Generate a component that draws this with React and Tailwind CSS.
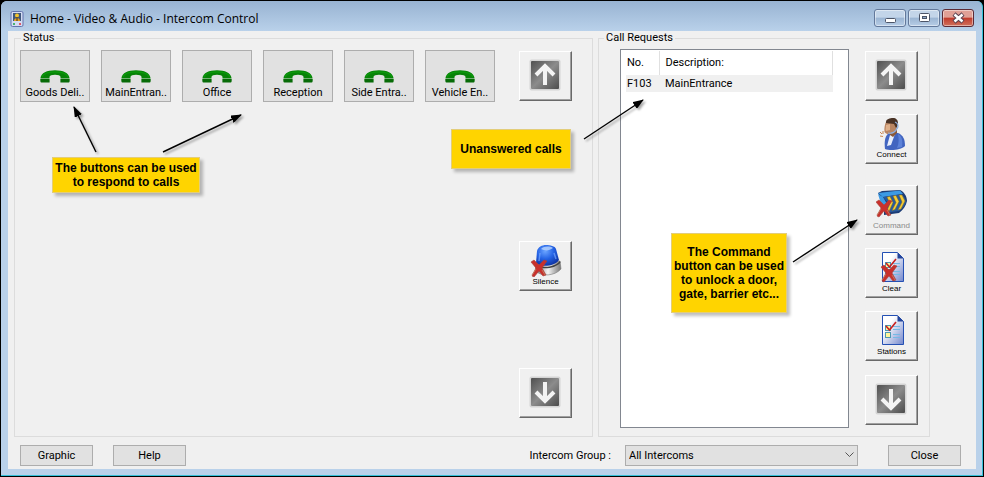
import React, { useState } from "react";

const STATIONS = ["Goods Deli..", "MainEntran..", "Office", "Reception", "Side Entra..", "Vehicle En.."];
const CALLS = [{ no: "F103", description: "MainEntrance" }];

export default function App() {
  const [group, setGroup] = useState("All Intercoms");

  return (
    <div className="relative flex min-h-screen flex-col bg-black p-px font-['Roboto','Noto_Sans',sans-serif] text-[11px] leading-[14px] text-black">
      <div className="flex flex-1 flex-col rounded-t-md border-r border-b border-[#35c0d8] bg-[#b9d1ea] bg-linear-to-b from-[#98b3d2] to-[#b9d1ea] to-[30px] pr-[6px] pb-[6px] pl-[7px]">
        {/* Title bar */}
        <header className="flex h-[30px] items-center gap-[6px] pt-[6px] pl-[2px]">
          <AppIcon />
          <h1 className="flex-1 font-['Open_Sans','Noto_Sans',sans-serif] text-[12px] leading-4">Home - Video &amp; Audio - Intercom Control</h1>
          <div className="flex gap-[2px] pr-[2px] pb-[2px]">
            <CaptionButton label="Minimize">
              <rect x="10.5" y="8.5" width="10" height="4" rx="1" fill="#fff" stroke="#4c5568" />
            </CaptionButton>
            <CaptionButton label="Maximize">
              <rect x="10.5" y="3.5" width="10" height="8" rx="1" fill="#fff" stroke="#4c5568" />
              <rect x="13.5" y="6.5" width="4" height="2" fill="#8fa9c8" stroke="#4c5568" />
            </CaptionButton>
            <CaptionButton label="Close window" danger>
              <path d="M11 4l9 8M20 4l-9 8" stroke="#5a4250" strokeWidth="4.5" />
              <path d="M11.5 4.5l8 7M19.5 4.5l-8 7" stroke="#fff" strokeWidth="2.5" />
            </CaptionButton>
          </div>
        </header>

        <main className="flex flex-1 flex-col bg-[#f0f0f0]">
          <div className="flex flex-1 gap-[5px] pr-[46px] pl-[6px]">
            {/* Stations */}
            <fieldset className="flex min-w-0 flex-1 justify-between border border-[#dcdcdc] pr-5 pb-[18px] pl-[5px]">
              <legend className="ml-px px-[2px]">Status</legend>
              <div className="flex flex-wrap content-start gap-[11px] pt-[5px]">
                {STATIONS.map((name) => (
                  <button
                    key={name}
                    className="flex h-[52px] w-[70px] flex-col items-center justify-end border border-[#adadad] bg-[#e1e1e1] pb-px whitespace-nowrap hover:bg-[#e5f1fb]"
                  >
                    <PhoneIcon />
                    <span>{name}</span>
                  </button>
                ))}
              </div>
              <div className="flex shrink-0 flex-col pt-[6px]">
                <ToolButton title="Scroll stations up"><ArrowIcon /></ToolButton>
                <ToolButton label="Silence" className="mt-[140px]"><SirenIcon /></ToolButton>
                <ToolButton title="Scroll stations down" className="mt-auto"><ArrowIcon down /></ToolButton>
              </div>
            </fieldset>

            {/* Call requests */}
            <fieldset className="flex w-[332px] min-w-0 gap-4 border border-[#dcdcdc] pr-[11px] pl-[21px]">
              <legend className="-ml-4 px-[2px]">Call Requests</legend>
              <div className="mt-1 mb-2 flex-1 border border-[#828790] bg-white pt-px pl-[5px]">
                <table className="w-[207px] border-collapse text-left">
                  <thead>
                    <tr className="h-6">
                      <th className="w-[33px] border-r border-[#e0e0e0] p-0 pl-px font-normal">No.</th>
                      <th className="border-r border-[#e0e0e0] p-0 pl-[6px] font-normal">Description:</th>
                    </tr>
                  </thead>
                  <tbody>
                    {CALLS.map((c) => (
                      <tr key={c.no} className="h-[17px] bg-[#f0f0f0]">
                        <td className="p-0 pl-px">{c.no}</td>
                        <td className="p-0 pl-[6px]">{c.description}</td>
                      </tr>
                    ))}
                  </tbody>
                </table>
              </div>
              <div className="flex shrink-0 flex-col pt-[6px] pb-[11px]">
                <ToolButton title="Scroll calls up"><ArrowIcon /></ToolButton>
                <ToolButton label="Connect" className="mt-[13px]"><PersonIcon /></ToolButton>
                <ToolButton label="Command" className="mt-[21px]" disabled><CommandIcon /></ToolButton>
                <ToolButton label="Clear" className="mt-[13px]"><ListIcon crossed /></ToolButton>
                <ToolButton label="Stations" className="mt-[13px]"><ListIcon /></ToolButton>
                <ToolButton title="Scroll calls down" className="mt-auto"><ArrowIcon down /></ToolButton>
              </div>
            </fieldset>
          </div>

          <footer className="flex h-8 items-end gap-5 pr-[15px] pb-[3px] pl-3">
            <PushButton>Graphic</PushButton>
            <PushButton>Help</PushButton>
            <div className="ml-auto flex items-center gap-[14px] pr-[10px]">
              <label htmlFor="group">Intercom Group :</label>
              <div className="relative">
                <select
                  id="group"
                  value={group}
                  onChange={(e) => setGroup(e.target.value)}
                  className="block h-[21px] w-[233px] appearance-none border border-[#adadad] bg-[#e1e1e1] pl-[3px]"
                >
                  <option>All Intercoms</option>
                </select>
                <svg className="pointer-events-none absolute top-[7px] right-1" width="9" height="6" fill="none" stroke="#555">
                  <path d="M.5.5l4 4 4-4" />
                </svg>
              </div>
            </div>
            <PushButton>Close</PushButton>
          </footer>
        </main>
      </div>

      <Notes />
    </div>
  );
}

function CaptionButton({ label, danger, children }) {
  return (
    <button
      aria-label={label}
      className={`h-[18px] w-8 rounded-[3px] border shadow-[inset_0_0_0_1px_rgba(255,255,255,0.45)] ${
        danger
          ? "border-[#5c2a35] bg-linear-to-b from-[#e0a096] from-45% via-[#c0392b] via-50% to-[#d0705c]"
          : "border-[#62789a] bg-linear-to-b from-[#c3d5e9] from-45% via-[#9bb5d3] via-50% to-[#b7cde6]"
      }`}
    >
      <svg width="30" height="16" fill="none">{children}</svg>
    </button>
  );
}

function ToolButton({ label, title, className = "", disabled, children }) {
  return (
    <button
      title={title}
      aria-label={title}
      disabled={disabled}
      className={`flex h-[50px] w-[53px] shrink-0 flex-col items-center border border-t-white border-r-[#696969] border-b-[#696969] border-l-white bg-[#f0f0f0] font-['Liberation_Sans',sans-serif] text-[8px] leading-[10px] shadow-[inset_-1px_-1px_#a0a0a0] disabled:text-[#8a8a8a] ${label ? "pt-[3px]" : "justify-center pr-px pb-[2px]"} ${className}`}
    >
      {children}
      {label && <span>{label}</span>}
    </button>
  );
}

function PushButton({ children }) {
  return (
    <button className="h-[21px] w-[73px] border border-[#adadad] bg-[#e1e1e1] hover:bg-[#e5f1fb]">{children}</button>
  );
}

/* Callouts that float over the window */
function Notes() {
  return (
    <div className="pointer-events-none absolute inset-0">
      <Note className="top-[157px] left-[52px] h-9 w-[148px]">The buttons can be used<br />to respond to calls</Note>
      <Note className="top-[129px] left-[451px] h-10 w-[120px]">Unanswered calls</Note>
      <Note className="top-[233px] left-[671px] h-20 w-[116px]">The Command<br />button can be used<br />to unlock a door,<br />gate, barrier etc...</Note>
      <svg className="absolute top-0 left-0 drop-shadow-[2px_2px_1px_rgba(0,0,0,0.35)]" width="984" height="477" stroke="#000" strokeWidth="1.4">
        <defs>
          <marker id="head" markerUnits="userSpaceOnUse" markerWidth="12" markerHeight="8" refX="10" refY="4" orient="auto">
            <path d="M0 0l11 4-11 4z" stroke="none" />
          </marker>
        </defs>
        <path d="M96 152L74 107" markerEnd="url(#head)" />
        <path d="M163 152L241 115" markerEnd="url(#head)" />
        <path d="M584 139L643 100" markerEnd="url(#head)" />
        <path d="M793 262L857 220" markerEnd="url(#head)" />
      </svg>
    </div>
  );
}

function Note({ className, children }) {
  return (
    <p className={`absolute flex items-center justify-center border border-[#e3cd7a] bg-[#ffd400] text-center font-['Liberation_Sans',sans-serif] text-[12px] leading-[14px] font-bold whitespace-nowrap shadow-[3px_3px_3px_rgba(0,0,0,0.25)] ${className}`}>
      <span>{children}</span>
    </p>
  );
}

/* Icons */
function AppIcon() {
  return (
    <svg width="14" height="16" viewBox="0 0 14 16">
      <rect x="1" y=".5" width="12" height="15" rx="1.5" fill="#d4dcf2" stroke="#6474ae" />
      <rect x="3" y="2" width="8" height="8" fill="#40577c" />
      <circle cx="7" cy="4.5" r="2" fill="#f5c52c" />
      <path d="M4 10c0-4 6-4 6 0z" fill="#e9a21c" />
      <path d="M7 6v4" stroke="#302a30" />
      <path d="M3 13h2" stroke="#18a54a" strokeWidth="1.5" />
      <path d="M9 13h2" stroke="#e02c3c" strokeWidth="1.5" />
    </svg>
  );
}

function PhoneIcon() {
  return (
    <svg width="30" height="13" viewBox="0 0 30 13" className="mb-[3px]">
      <path d="M.5 8C1 3 7 .3 15 .3S29 3 29.5 8v.5h-9V7C20.5 5.500 18 4.800 15 4.800S9.5 5.500 9.5 7v1.500h-9z" fill="#078207" />
      <path d="M.3 9h9.300v3.500H1.300C.3 12.500.3 11 .3 9zM20.400 9h9.300c0 2 0 3.500-1 3.500h-8.300z" fill="#076b07" />
      <path d="M2 7c1-3 6-5 13-5s12 2 13 5" fill="none" stroke="#0b970b" strokeWidth="1.5" />
    </svg>
  );
}

function ArrowIcon({ down }) {
  return (
    <svg width="32" height="32" viewBox="0 0 32 32">
      <defs>
        <linearGradient id="steel" x1="0" y1="0" x2="1" y2="1">
          <stop offset="0" stopColor="#505050" />
          <stop offset=".5" stopColor="#8c8c8c" />
          <stop offset="1" stopColor="#4c4c4c" />
        </linearGradient>
      </defs>
      <rect x=".5" y=".5" width="31" height="31" rx="2" fill="#d4d4d4" />
      <rect x="2" y="2" width="28" height="28" rx="1" fill="url(#steel)" />
      <path d={down ? "M16 6v19M7 16l9 9 9-9" : "M16 26V7M7 16l9-9 9 9"} fill="none" stroke="#f4f4f4" strokeWidth="4" />
    </svg>
  );
}

function RedCross({ x, y }) {
  return (
    <g transform={`translate(${x} ${y})`}>
      <path d="M0 2l3-2 5 5 5-5 3 1-5 7 4 7-3 1-4-5-5 6-2-1 4-8z" fill="#c9302c" stroke="#a5423a" strokeWidth=".6" />
      <path d="M5 9l-4 6M11 10l3 5" stroke="#c0765c" strokeWidth="1" />
    </g>
  );
}

function SirenIcon() {
  return (
    <svg width="32" height="32" viewBox="0 0 32 32">
      <defs>
        <radialGradient id="dome" cx=".4" cy=".3" r=".75">
          <stop offset="0" stopColor="#6aa4ff" />
          <stop offset=".5" stopColor="#2462e4" />
          <stop offset="1" stopColor="#0c2f9e" />
        </radialGradient>
        <linearGradient id="base" x1="0" x2="1">
          <stop offset="0" stopColor="#777" />
          <stop offset=".5" stopColor="#f4f4f4" />
          <stop offset="1" stopColor="#777" />
        </linearGradient>
      </defs>
      <path d="M5 19l1 7c5 6 19 5 25-2l-1-8z" fill="url(#base)" stroke="#777" strokeWidth=".6" />
      <path d="M5 19c7 5 20 3 25-3l.5 1.500C25 24 12 25 5.500 21z" fill="#424242" />
      <path d="M6 18L7 6c1-4 5-6 9-6s9 1 10 4l3 11c-4 6-17 8-23 3z" fill="url(#dome)" />
      <path d="M11 4c3-3 9-3 12-1-4 3-8 3-12 1z" fill="#b8d4ff" opacity=".8" />
      <path d="M10 8l-1 8M24 8l2 6" stroke="#73a6ff" strokeWidth="1.5" opacity=".7" />
      <RedCross x={1} y={15} />
    </svg>
  );
}

function PersonIcon() {
  return (
    <svg width="32" height="32" viewBox="0 0 32 32">
      <path d="M9 31c-1-8 0-15 6-17l7 1c5 2 7 6 7 13-4 4-15 5-20 3z" fill="#4265c0" />
      <path d="M14 17l5-1-4 11-4 1z" fill="#e8eefb" />
      <path d="M22 16c4 2 5 7 4 13l-5 1c2-5 2-9 1-14z" fill="#5d82d8" />
      <path d="M14 12l7-1v4l-4 4-3-2z" fill="#8c5a38" />
      <path d="M10 4c-1 2-2 6-1.500 10 1 2 5 3 8 1 4-2 5-6 4-11z" fill="#b98562" />
      <path d="M10 7c0 3-1 5 0 6l4-1V6z" fill="#dfb08a" />
      <path d="M10 4c0-3 4-4 7-4s5 2 5 5-1 4-2 5l-2-4-8-1z" fill="#493225" />
      <path d="M19 4c3 1 4 4 2 7M12 15c4 1 8-1 9-5" fill="none" stroke="#8fb0df" strokeWidth="1.2" />
      <path d="M4 14l2 2M7 13v3M4 18l3 .5" stroke="#cc8850" strokeWidth="1" />
    </svg>
  );
}

function CommandIcon() {
  return (
    <svg width="32" height="32" viewBox="0 0 32 32">
      <path d="M2 4l4-2 18-1c4 2 7 6 7 11-1 5-4 9-8 12l-15 2V15z" fill="#1c3c75" />
      <path d="M2 4l22-2.500L27 5 7 8zM2 5l5 3 4 7-3 8-3-8z" fill="#3c9ae4" />
      <path d="M7 8l18-3c4 3 5 6 5 8-1 4-4 7-7 9l-14 2 4-9z" fill="#285a9c" />
      <path d="M11 8l3-.5 3 6-4 9-3 1 4-9zM17 7l3-.5 3 6-4 8-3 1 4-8zM23 6l3 0 3 6-4 8-3 1 4-8z" fill="#f6cd35" stroke="#806b22" strokeWidth=".5" />
      <RedCross x={0} y={11} />
    </svg>
  );
}

function ListIcon({ crossed }) {
  return (
    <svg width="32" height="32" viewBox="0 0 32 32">
      <defs>
        <linearGradient id="paper" x1="0" y1="0" x2="1" y2="1">
          <stop offset=".3" stopColor="#fff" />
          <stop offset="1" stopColor="#7286cc" />
        </linearGradient>
      </defs>
      <path d="M6.500.5h15l6 6v23h-21z" fill="url(#paper)" stroke="#2450b4" />
      <path d="M21.500.5v6h6z" fill="#24459a" />
      <path d="M17 11.500h7M17 14.500h7M17 19.500h7M17 22.500h7" stroke="#75b9e5" strokeWidth="1" />
      <rect x="9.5" y="10.5" width="5" height="5" fill="#fff59c" stroke="#4d97b0" />
      <rect x="9.5" y="17.5" width="5" height="5" fill="#fff59c" stroke="#4d97b0" />
      <path d="M10 11l3.500 4L20 7" fill="none" stroke="#c8201e" strokeWidth="1.6" />
      {crossed && <RedCross x={5} y={13} />}
    </svg>
  );
}
